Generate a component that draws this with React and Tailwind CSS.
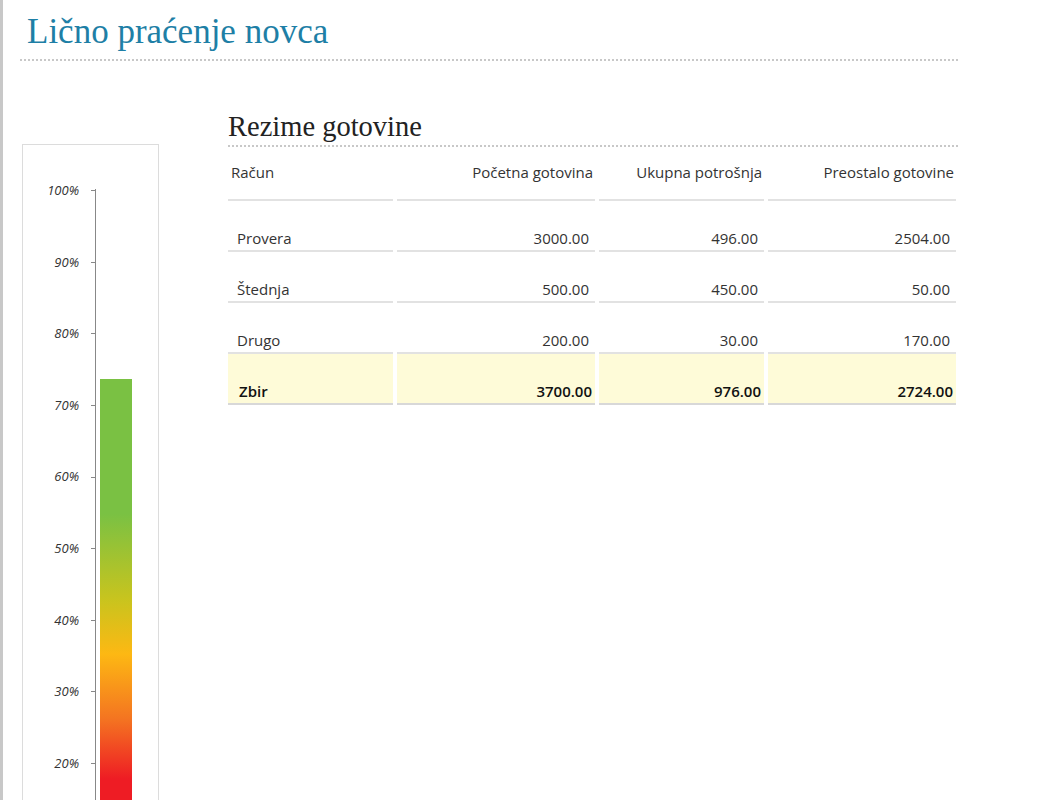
export default function App() {
  const ticks = ["100%", "90%", "80%", "70%", "60%", "50%", "40%", "30%", "20%"];
  const rows = [
    ["Provera", "3000.00", "496.00", "2504.00"],
    ["Štednja", "500.00", "450.00", "50.00"],
    ["Drugo", "200.00", "30.00", "170.00"],
  ];
  const cols = ["w-[165px]", "w-[198px]", "w-[165px]", "w-[188px]"];
  const font = { fontFamily: "'Open Sans', 'Liberation Sans', sans-serif" };
  return (
    <div className="w-[1042px] h-[800px] overflow-hidden bg-white relative border-l-[3px] border-[#c8c8c8]">
      <div className="pl-[24px] pt-[10px]">
        <h1 className="text-[35px] leading-[44px] text-[#1e7fa6]" style={{ fontFamily: "'Liberation Serif', serif" }}>Lično praćenje novca</h1>
      </div>
      <div className="ml-[17px] mt-[5px] w-[938px] border-b-2 border-dotted border-[#c8c8c8]" />
      <div className="flex mt-[48px]">
        <div className="ml-[19px] mt-[35px] w-[137px] h-[700px] border border-[#dcdcdc] relative">
          <div className="absolute left-[72px] top-[44px] w-px h-[700px] bg-[#888]" />
          {ticks.map((t, i) => (
            <div key={t} className="absolute left-0 flex items-center" style={{ top: 36 + i * 71.6 }}>
              <span className="w-[56px] text-right text-[13px] italic text-[#333]" style={font}>{t}</span>
              <span className="ml-[12px] w-[5px] h-px bg-[#888]" />
            </div>
          ))}
          <div className="absolute left-[77px] top-[234px] w-[32px] h-[500px]" style={{ background: "linear-gradient(to bottom,#7ac143 0%,#7ac143 27%,#c8c41e 44%,#fdb813 55%,#f47421 68%,#ee1c24 80%,#ee1c24 100%)" }} />
        </div>
        <div className="ml-[69px]" style={font}>
          <h2 className="text-[28.5px] leading-[32px] text-[#222] mt-[2px]" style={{ fontFamily: "'Liberation Serif', serif" }}>Rezime gotovine</h2>
          <div className="w-[730px] border-b-2 border-dotted border-[#c8c8c8] mt-[2px]" />
          <div className="flex gap-[4px] text-[15px] text-[#333] mt-[12px]">
            {["Račun", "Početna gotovina", "Ukupna potrošnja", "Preostalo gotovine"].map((h, i) => (
              <div key={h} className={`${cols[i]} h-[42px] pt-[2px] border-b-2 border-[#e2e2e2] ${i ? "text-right pr-[2px]" : "pl-[3px]"}`}>{h}</div>
            ))}
          </div>
          {rows.map((r) => (
            <div key={r[0]} className="flex gap-[4px] text-[15px] text-[#333]">
              {r.map((c, i) => (
                <div key={i} className={`${cols[i]} h-[51px] flex items-end pb-[1px] border-b-2 border-[#e2e2e2] ${i ? "justify-end pr-[6px]" : "pl-[9px]"}`}>{c}</div>
              ))}
            </div>
          ))}
          <div className="flex gap-[4px] text-[15px] text-[#111] font-semibold">
            {["Zbir", "3700.00", "976.00", "2724.00"].map((c, i) => (
              <div key={i} className={`${cols[i]} h-[51px] bg-[#fefbd8] flex items-end pb-[1px] border-b-2 border-[#d8d8d8] ${i ? "justify-end pr-[3px]" : "pl-[11px]"}`}>{c}</div>
            ))}
          </div>
        </div>
      </div>
    </div>
  );
}
